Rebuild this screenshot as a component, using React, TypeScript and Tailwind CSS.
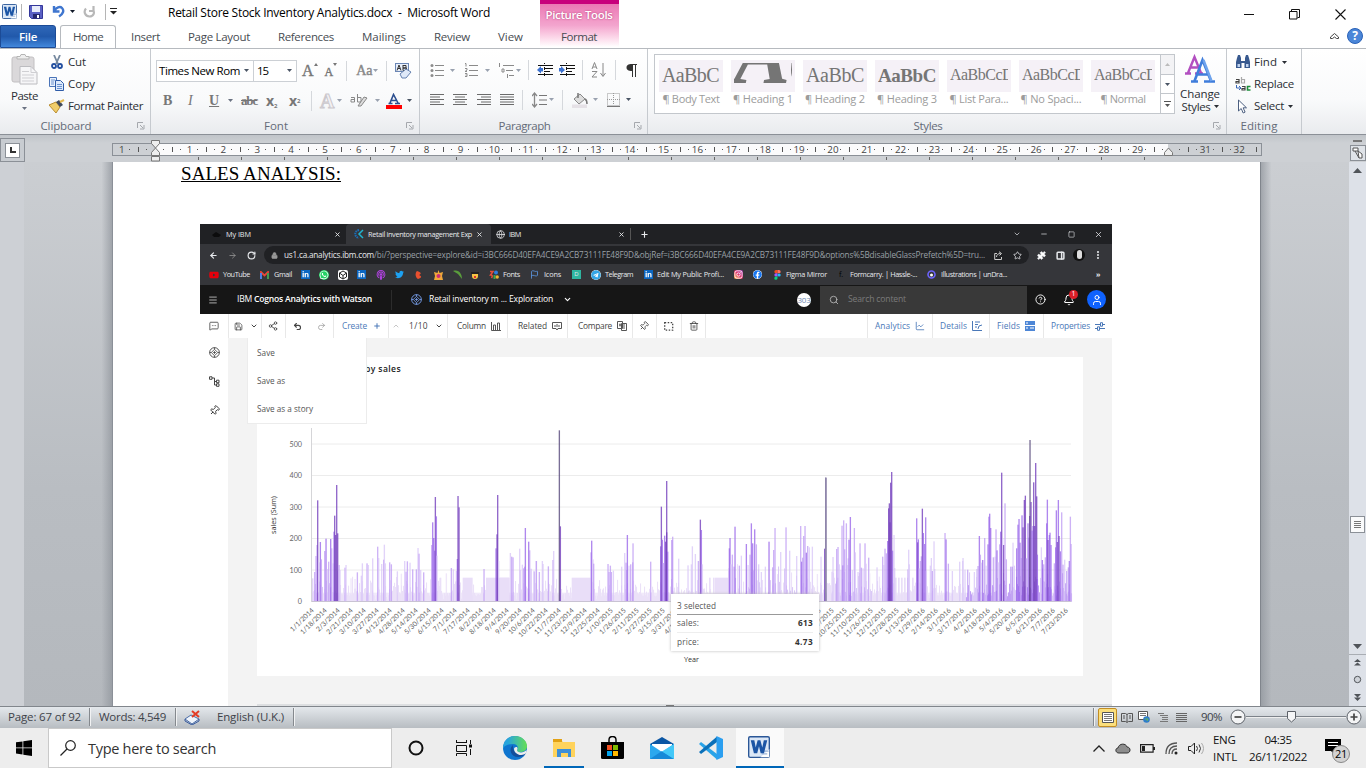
import React, { useLayoutEffect, useRef } from "react";
import {
  Search, Trash2, Pin, Share2, ChevronDown, ChevronUp, Undo2, Redo2, MessageSquareMore, Save, Plus, X,
  ArrowLeft, ArrowRight, RotateCw, Lock, Star, Puzzle, EllipsisVertical, Menu, CircleHelp, Bell, User,
  ChartLine, Globe, Flag, Minus, Square, PanelRight,
} from "lucide-react";
import { FaYoutube, FaLinkedinIn, FaWhatsapp, FaTwitter, FaInstagram, FaFacebook, FaTelegram, FaPodcast } from "react-icons/fa";

/** Text set to an exact width by spreading its letters. */
function T({ w, className = "", children }: { w: number; className?: string; children: string }) {
  const ref = useRef<HTMLSpanElement>(null);
  useLayoutEffect(() => {
    const el = ref.current;
    if (!el) return;
    el.style.letterSpacing = "0px";
    const natural = el.getBoundingClientRect().width;
    el.style.letterSpacing = `${(w - natural) / children.length}px`;
  }, [w, children]);
  return <span ref={ref} className={`inline-block shrink-0 whitespace-pre ${className}`}>{children}</span>;
}

function I({ w, h, className = "", children }: { w: number; h: number; className?: string; children: React.ReactNode }) {
  return <svg width={w} height={h} viewBox={`0 0 ${w} ${h}`} fill="none" className={`block shrink-0 ${className}`}>{children}</svg>;
}

const Arrow = ({ className = "" }: { className?: string }) => (
  <I w={5} h={3} className={className || "text-gray-600"}><path d="M0 0h5L2.5 3z" fill="currentColor" /></I>
);
const Sep = ({ className = "" }: { className?: string }) => <div className={`h-5 w-px shrink-0 bg-[#d5d8dc] ${className}`} />;
const Launcher = ({ className = "" }: { className?: string }) => (
  <I w={8} h={8} className={`text-[#a5a8ad] ${className}`}><path d="M.5 6V.5H6M3 3l3 3M7 3v4H3" stroke="currentColor" /></I>
);

const wordFont = "font-['Open_Sans',sans-serif]";
const serif = "font-['Liberation_Serif',serif]";

function WordLogo({ s }: { s: number }) {
  return (
    <svg width={s} height={s} viewBox="0 0 16 16" className="block shrink-0">
      <rect x=".5" y=".5" width="15" height="15" rx="1" fill="#dbe7f6" stroke="#2b5797" />
      <path d="M9 15.5l6.500-6v6z" fill="#fff" /><path d="M10 13h4M11 11h4" stroke="#9bb4d8" />
      <path d="M2 3h2.600l1 5.400L7 3h2l1.400 5.400L11.500 3H14l-2.400 9.500H9.200L8 7.500l-1.300 5H4.300z" fill="#1c55a5" />
    </svg>
  );
}

function TitleArea() {
  return (
    <header className="flex h-12 bg-white">
      <div className="flex w-[540px] flex-col">
        <div className="flex h-[25px] items-center pb-[2px] pl-[2px]">
          <WordLogo s={15} />
          <div className="ml-1 h-4 w-px bg-[#b5b5b5]" />
          <I w={14} h={14} className="ml-[7px]"><path d="M.5.500h13v13h-11l-2-2z" fill="#5a60c4" stroke="#34379a" /><path d="M3 1h8v6H3z" fill="#e8ecfa" /><path d="M4 9h7v4.500H4z" fill="#26286e" /><path d="M8 10h2v3H8z" fill="#fff" /></I>
          <I w={13} h={13} className="ml-[9px]"><path d="M2 1v5.500h5.500M2.500 6C4 2.500 8 1 10 3c2.500 2.500 1 6-3 8.500" stroke="#3f76cf" strokeWidth="2.400" /></I>
          <Arrow className="ml-[5px] text-gray-900" />
          <I w={13} h={13} className="ml-2"><path d="M10.500 1v5H6M3 3.500C0 7 2.500 11.500 6.500 11.500S12 8 10 4.500" stroke="#b8b8b8" strokeWidth="2.200" /></I>
          <div className="ml-[9px] h-4 w-px bg-[#b5b5b5]" />
          <I w={7} h={7} className="ml-[4px]"><path d="M0 .500h7" stroke="#222" /><path d="M0 3h7L3.500 6.500z" fill="#222" /></I>
          <T w={322} className="ml-[51px] mt-[3px] text-[12px] text-black">Retail Store Stock Inventory Analytics.docx  -  Microsoft Word</T>
        </div>
        <div className="flex h-[23px] items-center text-[11.5px] text-[#474c52]">
          <div className="flex h-[23px] w-14 items-center justify-center rounded-tr-[3px] border border-[#1c4b96] bg-linear-to-b from-[#2f67b8] via-[#2159ab] to-[#4288dc] font-semibold text-white"><T w={18}>File</T></div>
          <div className="ml-1 h-6 w-14 rounded-t-[3px] border border-b-0 border-[#b6babf] bg-white pl-3 leading-[22px]"><T w={30}>Home</T></div>
          <T w={29} className="ml-[15px]">Insert</T>
          <T w={62} className="ml-7">Page Layout</T>
          <T w={56} className="ml-7">References</T>
          <T w={44} className="ml-7">Mailings</T>
          <T w={36} className="ml-7">Review</T>
          <T w={25} className="ml-7">View</T>
        </div>
      </div>
      <div className="flex h-[47px] w-[79px] flex-col items-center border-t-4 border-[#c8007c] bg-linear-to-b from-[#ea78b4] via-[#f3a5ce] via-50% to-white pr-[1px]">
        <div className="flex h-[22px] items-center"><T w={67} className="text-[11.5px] font-semibold text-white [text-shadow:0_0_2px_#b0306f]">Picture Tools</T></div>
        <div className="flex h-[21px] items-center"><T w={36} className="text-[11.5px] text-[#474c52]">Format</T></div>
      </div>
      <div className="flex grow flex-col items-end">
        <div className="flex h-7 items-center pr-5">
          <I w={10} h={10}><path d="M0 5.500h10" stroke="#111" /></I>
          <I w={11} h={11} className="ml-[35px]"><path d="M.5 2.500h7.500v7.500H.500zM2.500 2.500V.500h8v8h-2" stroke="#111" /></I>
          <I w={11} h={11} className="ml-[35px]"><path d="M.5.500l10 10M10.500.500l-10 10" stroke="#111" strokeWidth="1.100" /></I>
        </div>
        <div className="flex h-4 items-center pr-[3px]">
          <I w={9} h={7}><path d="M.5 4l4-3.500 4 3.500v1.500h-2L4.500 4 2.500 5.500h-2z" stroke="#444" /></I>
          <div className="ml-2 flex size-4 items-center justify-center rounded-full border border-[#2a62b8] bg-[#4b86d8] font-['Open_Sans',sans-serif] text-[12px] font-bold text-white">?</div>
        </div>
      </div>
    </header>
  );
}

const GroupLabel = ({ w, children, launcher = true }: { w: number; children: string; launcher?: boolean }) => (
  <div className="flex h-[15px] items-center pr-[5px] text-[11.5px] text-[#646b78]">
    <div className="flex grow justify-center pr-[5px]"><T w={w}>{children}</T></div>
    {launcher && <Launcher />}
  </div>
);

function Lines({ rows }: { rows: number[][] }) {
  return <I w={14} h={11}>{rows.map(([a, b], i) => <path key={i} d={`M${a} ${i * 2.5 + 0.5}H${b}`} stroke="#6b6b6b" />)}</I>;
}

function ListIcon({ kind }: { kind: "dot" | "num" }) {
  return (
    <I w={14} h={14}>
      <path d="M5 2.500h9M5 7.500h9M5 12.500h9" stroke="#8a8a8a" />
      {kind === "dot"
        ? <g fill="#8c8c8c"><circle cx="2" cy="2.500" r="1.500" /><circle cx="2" cy="7.500" r="1.500" /><circle cx="2" cy="12.500" r="1.500" /></g>
        : <path d="M1 .500h1v3M1 5.500h2v1.500l-2 1.500h2M1 10.500h2v3H1M1.500 12h1" stroke="#8c8c8c" />}
    </I>
  );
}

function IndentIcon({ flip = false }: { flip?: boolean }) {
  return (
    <I w={16} h={14}>
      <path d="M1 2.500h15M7 5.500h9M7 8.500h6M1 11.500h15" stroke="#111" strokeWidth="1.200" />
      <path d="M7.500 0v14" stroke="#111" strokeDasharray="1 1" />
      <path d={flip ? "M0 5h2V3l4 4-4 3.500V8.500H0z" : "M6 5H4V3L0 7l4 3.500V8.500h2z"} fill="#3c72d0" />
    </I>
  );
}

const styleTiles = [
  { name: "Body Text", sample: "AaBbC", w: 57, lw: 57, cls: "text-[20px] mt-[2px]" },
  { name: "Heading 1", sample: "Aa", w: 98, lw: 60, cls: "text-[84px] font-bold italic -mt-[50px]" },
  { name: "Heading 2", sample: "AaBbC", w: 58, lw: 60, cls: "text-[20px] mt-[2px]" },
  { name: "Heading 3", sample: "AaBbC", w: 58, lw: 60, cls: "text-[19px] mt-[3px] font-bold" },
  { name: "List Para...", sample: "AaBbCcD", w: 63, lw: 59, cls: "text-[16px] mt-[4px]" },
  { name: "No Spaci...", sample: "AaBbCcD", w: 63, lw: 61, cls: "text-[16px] mt-[4px]" },
  { name: "Normal", sample: "AaBbCcD", w: 63, lw: 45, cls: "text-[16px] mt-[4px]" },
];

function Ribbon() {
  const group = "flex h-[85px] shrink-0 flex-col border-r border-[#c6cacf]";
  return (
    <div className="flex h-[87px] border-y border-t-[#b6babf] border-b-[#8b9097] bg-linear-to-b from-white via-[#f9fafb] via-60% to-[#e9ebee] text-[11.5px] text-[#2a2e34]">
      <div className={`${group} w-[151px]`}>
        <div className="flex h-[69px]">
          <div className="flex w-[49px] flex-col items-center pt-[5px]">
            <I w={27} h={31}><rect x="1" y="3" width="22" height="25" rx="2" fill="#dad8da" stroke="#c2c0c2" /><path d="M6 5h12V2.500h-3L14 .500h-4L9 2.500H6z" fill="#eee" stroke="#b5b5b5" /><path d="M9 12.500h11l6 6V30H9z" fill="#f6f6f8" stroke="#bcbcc0" /><path d="M20 12.500v6h6M11 17.500h7M11 21h12M11 24h12M11 27h12" stroke="#cfcfd3" /></I>
            <T w={27} className="mt-[3px] leading-4">Paste</T>
            <Arrow className="mt-[3px] text-gray-500" />
          </div>
          <div className="flex flex-col pt-[2px]">
            <div className="flex h-[22px] items-center"><I w={16} h={14}><path d="M5 0l4 9M11 0L7 9" stroke="#76899f" strokeWidth="1.800" /><circle cx="5" cy="11" r="2" stroke="#2450a0" strokeWidth="1.800" /><circle cx="11" cy="11" r="2" stroke="#2450a0" strokeWidth="1.800" /></I><T w={18} className="ml-[3px]">Cut</T></div>
            <div className="flex h-[22px] items-center"><I w={16} h={14}><path d="M.5.500h7v9h-7z" fill="#eaf1fc" stroke="#4a74b8" /><path d="M6.500 3.500h5l3 3v7h-8z" fill="#dce9fb" stroke="#2f5ca8" /><path d="M2 3h4M2 5h3M2 7h3M8 7.500h5M8 9.500h5M8 11.500h5" stroke="#6b92d0" /></I><T w={27} className="ml-[3px]">Copy</T></div>
            <div className="flex h-[22px] items-center"><I w={16} h={14}><path d="M0 6l7-3 4 5-4 6z" fill="#f0cd6a" stroke="#b98d30" /><path d="M7 3l3-2 4 5-3 2z" fill="#3f4a5c" /><path d="M11 3l4-2" stroke="#e4b94e" strokeWidth="2" /></I><T w={75} className="ml-[3px]">Format Painter</T></div>
          </div>
        </div>
        <GroupLabel w={51}>Clipboard</GroupLabel>
      </div>

      <div className={`${group} w-[269px]`}>
        <div className="flex h-[69px] flex-col pl-[5px]">
          <div className="flex h-[43px] items-center">
            <div className="flex h-[22px] w-[98px] items-center border border-[#ccd0d5] bg-white pl-[2px] text-black"><T w={81}>Times New Rom</T><Arrow className="ml-[4px] text-gray-600" /></div>
            <div className="flex h-[22px] w-[43px] items-center border border-l-0 border-[#ccd0d5] bg-white pl-[3px] text-black"><T w={11}>15</T><Arrow className="ml-[19px] text-gray-600" /></div>
            <span className={`${serif} ml-[5px] text-[16px] text-[#777] [-webkit-text-stroke:0.4px_#777]`}>A</span><I w={4} h={3} className="mb-3"><path d="M0 3h4L2 0z" fill="#777" /></I>
            <span className={`${serif} ml-[7px] mt-[2px] text-[12px] text-[#777] [-webkit-text-stroke:0.4px_#777]`}>A</span><I w={4} h={3} className="mb-3"><path d="M0 0h4L2 3z" fill="#777" /></I>
            <Sep className="ml-[9px]" />
            <T w={16} className={`${serif} ml-[9px] text-[14px] text-[#888] [-webkit-text-stroke:0.4px_#888]`}>Aa</T><Arrow className="ml-[1px] text-gray-400" />
            <Sep className="ml-[8px]" />
            <I w={17} h={16} className="ml-[8px]"><rect x=".5" y=".5" width="13" height="8" fill="#e8effa" stroke="#6a86b5" /><path d="M2 7.500L4 2l2 5.500M3 5.500h2M8 2v5.500M8 2.500h3v2.500H8h3.500v2.500H8" stroke="#333" /><path d="M5 11l6-5 5 3-5 6-4 0z" fill="#dfe9f8" stroke="#6682b0" /></I>
          </div>
          <div className={`${serif} flex h-[17px] items-center text-[14px] text-[#777]`}>
            <b className="ml-[7px] w-[24px]">B</b><i className="w-[22px] pl-[1px]">I</i><u className="w-[19px] font-bold">U</u><Arrow className="text-gray-500" />
            <T w={16} className="ml-[8px] text-[13px] font-bold line-through">abc</T>
            <span className="ml-[9px] w-[23px] font-['Open_Sans',sans-serif] font-bold">x<sub className="text-[6px]">2</sub></span>
            <span className="w-[22px] font-['Open_Sans',sans-serif] font-bold">x<sup className="text-[6px]">2</sup></span>
            <Sep />
            <span className="ml-[8px] w-[17px] text-[20px] font-bold text-[#f3f1f4] [-webkit-text-stroke:1px_#cbc8cd]">A</span><Arrow className="text-gray-400" />
            <I w={18} h={13} className="ml-[8px]"><path d="M1 3.500h3.500V8H1V5.500h3.500M7.500 0v8H11V3.500H7.500" stroke="#888" /><path d="M8 12l6-9 3 1-6 8z" fill="#ddd" stroke="#888" /></I><Arrow className="ml-[7px] text-gray-400" />
            <I w={16} h={16} className="ml-[6px]"><path d="M2.500 10.500h4M9 10.500h5M4 10L7.500 1.500 12 10M5.500 7.500h5" stroke="#2c4f8f" strokeWidth="1.600" /><path d="M0 12h16v4H0z" fill="#f00" /></I><Arrow className="ml-[5px] text-gray-600" />
          </div>
        </div>
        <GroupLabel w={24}>Font</GroupLabel>
      </div>

      <div className={`${group} w-[228px]`}>
        <div className="flex h-[69px] flex-col pl-[10px]">
          <div className="flex h-[42px] items-center">
            <ListIcon kind="dot" /><Arrow className="ml-[6px] text-gray-400" />
            <div className="ml-[9px]"><ListIcon kind="num" /></div><Arrow className="ml-[7px] text-gray-400" />
            <I w={17} h={15} className="ml-[8px]"><path d="M5 2.500h11M8 7.500h7M11 12.500h5M1.500 0v4M4 6h2v3H4zM9.500 11v4" stroke="#8a8a8a" /></I><Arrow className="ml-[1px] text-gray-400" />
            <Sep className="ml-[7px]" />
            <div className="ml-[8px]"><IndentIcon /></div><div className="ml-[6px]"><IndentIcon flip /></div>
            <Sep className="ml-[7px]" />
            <I w={15} h={16} className="ml-[8px]"><path d="M1 7l2.500-6.500L6 7M2 5h3M1 9.500h5L1 15h5M12 1v13M9.500 11l2.500 3.500 2.500-3.500" stroke="#888" /></I>
            <Sep className="ml-[9px]" />
            <I w={11} h={13} className="ml-[10px]"><path d="M6 .500H11M6.500 0v13M9.500 0v13" stroke="#333" /><path d="M6 0v7C2 7 .500 5.500.500 3.500S2 0 6 0z" fill="#333" /></I>
          </div>
          <div className="flex h-[17px] items-center">
            <Lines rows={[[0, 14], [0, 10], [0, 14], [0, 10], [0, 14]]} />
            <div className="ml-[9px]"><Lines rows={[[0, 14], [2, 12], [0, 14], [2, 12], [0, 14]]} /></div>
            <div className="ml-[10px]"><Lines rows={[[0, 14], [4, 14], [0, 14], [4, 14], [0, 14]]} /></div>
            <div className="ml-[9px]"><Lines rows={[[0, 14], [0, 14], [0, 14], [0, 14], [0, 14]]} /></div>
            <Sep className="ml-[8px]" />
            <I w={15} h={16} className="ml-[9px]"><path d="M7 3.500h8M7 8h8M7 12.500h8" stroke="#777" /><path d="M2.500 2v12M0 4l2.500-3L5 4M0 12l2.500 3L5 12" stroke="#888" strokeWidth="1.300" /></I><Arrow className="ml-[2px] text-gray-400" />
            <Sep className="ml-[8px]" />
            <I w={16} h={16} className="ml-[9px]"><path d="M0 12.500h15V16H0z" fill="#e5e1e6" /><path d="M2 7l6-5 5 5-6 5z" fill="#ddd" stroke="#888" /><path d="M6 1v5M13 7c2 1 2 3 2 5" stroke="#777" strokeWidth="1.500" /></I><Arrow className="ml-[5px] text-gray-400" />
            <I w={14} h={14} className="ml-[9px]"><path d="M.5.500h12v12H.500zM6.500 0v12M0 6.500h13" stroke="#999" strokeDasharray="1 1" /><path d="M0 13.500h13" stroke="#777" /></I><Arrow className="ml-[5px] text-gray-600" />
          </div>
        </div>
        <GroupLabel w={52}>Paragraph</GroupLabel>
      </div>

      <div className={`${group} w-[579px]`}>
        <div className="flex h-[69px] pl-[6px] pt-[5px]">
          <div className="flex h-[60px] w-[521px] border border-[#c3c7cc] bg-white">
            <div className="flex grow gap-2 pl-[4px] pt-[5px]">
              {styleTiles.map((s) => (
                <div key={s.name} className="flex w-16 flex-col items-center">
                  <div className="flex h-8 w-16 justify-start bg-[#f5f1f7] pl-[3px] pt-[3px]">
                    <div className="flex h-[26px] w-[58px] items-start overflow-hidden"><T w={s.w} className={`${serif} leading-none text-[#757575] ${s.cls}`}>{s.sample}</T></div>
                  </div>
                  <T w={s.lw} className="text-[11px] leading-[14px] text-[#9c9c9c]">{"¶ " + s.name}</T>
                </div>
              ))}
            </div>
            <div className="flex w-[14px] flex-col border-l border-[#c3c7cc]">
              <div className="flex h-[19px] items-center justify-center bg-[#f3f3f5]"><I w={5} h={3}><path d="M0 3h5L2.500 0z" fill="#bbb" /></I></div>
              <div className="flex h-[20px] items-center justify-center border-y border-[#c3c7cc]"><Arrow /></div>
              <div className="flex h-[19px] items-center justify-center"><I w={7} h={6}><path d="M0 .500h7" stroke="#555" /><path d="M1 3h5L3.500 6z" fill="#555" /></I></div>
            </div>
          </div>
          <div className="flex w-[50px] flex-col items-center">
            <I w={31} h={30}>
              <path d="M0 19.500h6M10 19.500h8M3 19L9.500 3l6.500 16M5.500 13.500h8" stroke="#b24fc0" strokeWidth="2.400" />
              <path d="M6 27.500h7M19 27.500h11M9.500 27L17.500 6l8.500 21M12 20.500h11" stroke="#3f7ddb" strokeWidth="2.600" />
              <path d="M18.500 6l8 21" stroke="#6ea3ec" strokeWidth="2.400" />
            </I>
            <T w={40} className="mt-[3px] leading-[13px]">Change</T>
            <div className="flex items-center"><T w={29} className="leading-[13px]">Styles</T><Arrow className="ml-[3px]" /></div>
          </div>
        </div>
        <GroupLabel w={29}>Styles</GroupLabel>
      </div>

      <div className={`${group} w-[75px]`}>
        <div className="flex h-[69px] flex-col pl-[8px] pt-[2px]">
          <div className="flex h-[22px] items-center"><I w={16} h={14}><path d="M2 3l1-3h2l1 3v3h4V3l1-3h2l1 3 1 4v6H9.500V8h-3v5H1V7z" fill="#38598f" /><path d="M2.500 9h2.500v3H2.500zM11 9h2.500v3H11z" fill="#bed2f0" /></I><T w={23} className="ml-[3px]">Find</T><Arrow className="ml-[5px]" /></div>
          <div className="flex h-[22px] items-center"><I w={16} h={15}><path d="M1 2.500h3V6H1V4.500h3" stroke="#444" strokeWidth="1.200" /><path d="M6.500 0v6H9.500V2.500H6.500" stroke="#aaa" strokeWidth="1.200" /><path d="M7 9.500h3V13H7v-1.500h3" stroke="#444" strokeWidth="1.200" /><path d="M15.500 9.500h-3V13h3" stroke="#1d8f3a" strokeWidth="1.600" /><path d="M1.500 8v3h4M4 9l2 2-2 2" stroke="#3867b8" /></I><T w={40} className="ml-[3px]">Replace</T></div>
          <div className="flex h-[22px] items-center"><I w={16} h={15}><path d="M3.500 1v11l2.700-2.500 2 4.500 1.900-.900-2-4.300h3.400z" fill="#fff" stroke="#4c5f80" /></I><T w={30} className="ml-[3px]">Select</T><Arrow className="ml-[4px]" /></div>
        </div>
        <GroupLabel w={37} launcher={false}>Editing</GroupLabel>
      </div>
    </div>
  );
}

function Ruler() {
  const cm = 33.86;
  const x0 = 43.2;
  const marks = Array.from({ length: 34 }, (_, i) => i - 1);
  return (
    <div className="flex h-[27px] bg-linear-to-b from-[#c0c4c9] to-[#cdd0d4] to-30%">
      <div className="flex w-[112px] pt-[3px]">
        <div className="flex h-[24px] w-[25px] items-center justify-center border border-[#8b9097] bg-[#c8ccd1]"><div className="flex size-[15px] items-center justify-center border border-[#8b9097] bg-white"><I w={6} h={6}><path d="M1 0v5h5" stroke="#333" strokeWidth="2" /></I></div></div>
      </div>
      <I w={1170} h={27}>
        <rect x=".5" y="8.500" width="1149" height="12" fill="#cdd0d4" stroke="#8b9097" />
        <rect x="43" y="9" width="1013" height="11" fill="#fbfbfc" />
        {marks.map((n) => {
          const x = x0 + n * cm;
          return (
            <g key={n}>
              {n !== 0 && n !== 30 && <text x={x + 0.5} y="18" textAnchor="middle" fontSize="9.800" fontFamily="Open Sans" fill="#444">{Math.abs(n)}</text>}
              <g stroke="#555">
                {n < 32 && <path d={`M${Math.round(x + 8)} 14.500h1`} />}
                <path d={`M${Math.round(x + 16.900) + 0.5} 12v5`} />
                {n < 32 && <path d={`M${Math.round(x + 25)} 14.500h1`} />}
              </g>
            </g>
          );
        })}
        {Array.from({ length: 23 }, (_, i) => <path key={i} d={`M${86.5 + Math.round(i * 43)} 22v3`} stroke="#666" />)}
        <path d="M39.500 5.500h8v3l-4 4.500-4-4.500zM39.500 20.500v-3l4-4.500 4 4.500v3zM39.500 21.500h8v4.500h-8z" fill="#eee" stroke="#777" />
        <path d="M1052.500 20.500v-3l4-4.500 4 4.500v3z" fill="#eee" stroke="#777" />
      </I>
      <div className="grow" />
      <div className="flex w-[17px] flex-col items-center pt-[5px]">
        <div className="h-[2px] w-[9px] bg-[#777]" />
        <div className="mt-[3px] flex size-[16px] items-center justify-center border border-[#8b9097] bg-[#dfe3e8]"><I w={12} h={12}><path d="M1 1h5v3H1zM3 4l4 7M6 4l4 3v4H7z" stroke="#555" fill="#fff" /></I></div>
      </div>
    </div>
  );
}

/* Bars are [x, top, shade] in thirds of a pixel; the baseline is at 545. */
const shades = ["#ebe1f8", "#dac8f7", "#c09ff4", "#9b69ea", "#7440bd", "#574a7c"];
type Bar = [number, number, number];
const parts: { dx: number; bars: Bar[] }[] = [
  { dx: -186, bars: [
    [188, 475, 1], [194, 456, 2], [198, 408, 2], [201, 375, 2], [203, 241, 4], [207, 427, 1], [211, 366, 3], [214, 418, 2], [224, 393, 2], [228, 356, 3], [232, 447, 1], [236, 425, 2], [242, 357, 3], [245, 385, 2], [249, 430, 1], [252, 335, 3], [254, 287, 4], [257, 345, 4], [260, 195, 4], [263, 340, 4], [267, 435, 2], [270, 450, 1],
    [285, 443, 2], [288, 435, 1], [303, 475, 0], [315, 477, 0], [322, 457, 2], [334, 467, 1], [337, 430, 1], [351, 430, 2], [355, 435, 1], [368, 415, 1], [383, 380, 2], [386, 414, 1], [395, 432, 1], [401, 419, 2], [403, 374, 1], [406, 430, 1], [419, 427, 2], [424, 433, 2], [442, 454, 1], [454, 461, 0], [464, 423, 1], [468, 455, 2], [472, 424, 2], [480, 428, 1], [488, 448, 2], [499, 448, 2], [504, 384, 1], [507, 401, 2], [512, 450, 1], [521, 457, 2],
    [545, 375, 2], [548, 307, 3], [551, 354, 3], [554, 392, 3], [556, 231, 4], [559, 289, 3], [561, 407, 1], [570, 474, 0], [589, 460, 0], [604, 444, 2], [610, 448, 1], [619, 453, 1], [622, 417, 3], [624, 228, 4], [627, 262, 4], [702, 447, 2],
    [738, 385, 3], [741, 343, 4], [743, 225, 4], [746, 423, 1], [781, 399, 1], [785, 410, 2], [789, 412, 2], [809, 386, 1], [811, 450, 1], [817, 434, 1], [821, 445, 2], [824, 440, 2], [826, 324, 3], [836, 365, 3], [839, 391, 2], [843, 446, 1], [853, 455, 2], [859, 423, 1],
  ] },
  { dx: 654, bars: [
    [3, 447, 1], [12, 452, 1], [19, 423, 2], [28, 456, 2], [37, 423, 1], [39, 432, 1], [55, 439, 2], [69, 420, 2], [71, 393, 1], [88, 31, 5], [91, 319, 4], [183, 397, 2], [185, 362, 3], [189, 418, 1], [191, 431, 2], [234, 432, 2], [237, 456, 2], [241, 437, 2], [244, 456, 2], [250, 452, 1], [275, 440, 1], [284, 399, 1], [288, 428, 2], [290, 450, 2], [292, 345, 3], [297, 437, 1], [302, 433, 2], [308, 427, 2], [309, 370, 2], [362, 425, 2],
    [392, 379, 3], [394, 260, 4], [397, 359, 3], [400, 429, 2], [404, 347, 3], [407, 365, 4], [410, 183, 4], [410, 337, 4], [413, 395, 3], [426, 360, 3], [428, 350, 2], [446, 416, 1], [474, 436, 1], [484, 433, 1], [487, 379, 1], [496, 402, 1], [505, 423, 2], [511, 299, 4], [514, 330, 3], [517, 433, 1],
    [598, 385, 3], [600, 354, 3], [603, 433, 1], [607, 404, 2], [612, 440, 2], [615, 320, 3], [628, 437, 2], [634, 407, 1], [649, 372, 3], [654, 435, 1], [660, 404, 2], [664, 310, 3], [668, 370, 3], [674, 328, 3], [679, 373, 2], [686, 433, 1], [694, 456, 1], [706, 440, 1], [717, 365, 3], [728, 442, 2], [731, 390, 2], [735, 324, 2], [752, 396, 1], [768, 322, 2], [779, 392, 1], [800, 408, 1], [812, 318, 2], [815, 425, 3], [818, 413, 2], [821, 348, 2], [825, 318, 2], [829, 398, 3], [833, 378, 2], [838, 382, 1], [847, 380, 1], [862, 462, 0], [873, 410, 1], [884, 386, 4], [887, 173, 5],
  ] },
  { dx: 1494, bars: [
    [66, 455, 1], [69, 411, 1], [80, 387, 2], [84, 381, 2], [88, 433, 1], [93, 450, 1], [96, 317, 2], [99, 436, 3], [101, 301, 2], [104, 388, 2], [109, 310, 2], [114, 415, 1], [117, 359, 3], [121, 291, 3], [127, 450, 1], [133, 324, 2], [136, 397, 1], [144, 456, 1], [150, 370, 2], [154, 443, 2], [159, 445, 1], [165, 370, 2], [168, 431, 1], [176, 413, 2], [179, 460, 0], [201, 442, 1], [208, 470, 0], [218, 410, 2], [221, 435, 1], [225, 386, 2], [229, 400, 2], [233, 363, 3], [236, 265, 4], [238, 250, 4], [240, 307, 4], [242, 188, 4], [245, 156, 4], [248, 392, 3], [252, 345, 1], [254, 444, 1],
    [294, 448, 2], [296, 389, 1], [298, 433, 1], [320, 295, 3], [323, 367, 4], [325, 358, 3], [328, 445, 1], [331, 423, 2], [334, 409, 2], [337, 266, 4], [340, 339, 3], [344, 372, 3], [347, 292, 3], [349, 452, 1], [361, 437, 1], [364, 414, 1], [367, 453, 2], [372, 364, 1], [374, 447, 1], [405, 339, 2], [408, 358, 3], [415, 431, 2], [427, 453, 1], [449, 425, 1], [458, 423, 1], [459, 414, 1], [465, 449, 1], [473, 449, 2], [493, 456, 1], [500, 447, 1], [504, 438, 2], [508, 348, 3], [511, 404, 2], [514, 428, 1], [518, 420, 3], [524, 354, 2], [528, 437, 1], [534, 373, 3], [537, 290, 3], [539, 281, 3], [542, 324, 3], [550, 412, 2], [555, 410, 1], [558, 328, 2], [561, 391, 3], [565, 427, 1], [569, 373, 2], [572, 335, 3], [575, 158, 4], [578, 355, 1], [581, 375, 4], [585, 250, 2], [589, 418, 2], [602, 440, 2], [607, 440, 3], [609, 368, 1], [613, 437, 1],
    [620, 385, 3], [624, 314, 3], [627, 297, 3], [630, 368, 3], [633, 414, 2], [636, 286, 3], [639, 322, 4], [643, 240, 4], [646, 227, 4], [649, 415, 2], [654, 310, 3], [657, 353, 3], [659, 288, 4], [660, 60, 5], [663, 246, 4], [666, 332, 3], [669, 318, 3], [671, 187, 4], [674, 318, 4], [677, 129, 4], [680, 229, 4], [682, 404, 3], [694, 382, 1], [697, 420, 3], [701, 433, 2], [706, 412, 2], [710, 310, 3], [712, 239, 3], [714, 360, 4], [718, 345, 3], [720, 338, 3], [723, 375, 3], [733, 430, 2], [737, 382, 3], [739, 271, 3], [742, 366, 4], [745, 240, 3], [747, 348, 4], [751, 394, 3], [755, 277, 2], [759, 434, 2], [764, 419, 1], [770, 453, 2], [775, 442, 2], [778, 423, 3], [781, 290, 2], [783, 372, 2],
  ] },
];
const flats: [number, number][] = [[452, 482], [522, 592], [564, 592], [779, 836], [1209, 1254]];

const dates = ("1/1 1/18 2/3 2/21 3/10 3/27 4/12 4/28 5/14 5/30 6/15 7/1 7/17 8/2 8/18 9/4 9/20 10/6 10/22 11/7 11/23 12/9 12/25|" +
  "1/10 1/26 2/11 2/27 3/15 3/31 4/16 5/2 5/18 6/3 6/19 7/5 7/21 8/6 8/22 9/7 9/23 10/9 10/25 11/10 11/26 12/12 12/28|" +
  "1/13 1/29 2/14 3/1 3/17 4/2 4/18 5/4 5/20 6/5 6/21 7/7 7/23")
  .split("|").flatMap((year, i) => year.split(" ").map((d) => `${d}/${2014 + i}`));

function Chart() {
  let seed = 7;
  const rnd = () => ((seed = (seed * 16807) % 2147483647) / 2147483647);
  const filler: number[][] = [];
  for (let x = 3; x < 2278; x += 3) {
    const late = x > 1960;
    const busy = late || x < 85 || (x > 1245 && x < 1480) || (x > 1560 && x < 1680);
    filler.push([x, (rnd() < 0.12 ? 6 : 18) + rnd() * rnd() * (busy ? 95 : 60), late ? (rnd() > 0.5 ? 2 : 1) : busy && rnd() > 0.4 ? 1 : 0]);
  }
  return (
    <svg width="826" height="298" viewBox="257 378 826 298" className="block shrink-0">
      {[0, 1, 2, 3, 4, 5].map((n) => (
        <g key={n}>
          {n > 0 && <path d={`M312 ${601.5 - n * 31.5}h759`} stroke="#ececec" />}
          <text x="302" y={604 - n * 31.5} fontSize="7.200" textAnchor="end" fontFamily="Lato" fill="#666">{n * 100}</text>
        </g>
      ))}
      <path d="M311.500 428v174" stroke="#d5d5d8" />
      <g transform="translate(312 420) scale(.33333)">
        <rect x="0" y="518" width="2276" height="27" fill="#f1eafa" />
        {filler.map(([x, h, s]) => <rect key={x} x={x} y={545 - h} width="3.200" height={h} fill={shades[s]} />)}
        {flats.map(([a, b]) => <rect key={a} x={a} y="473" width={b - a} height="72" fill="#e9def8" />)}
        {[1575, 1749, 1758, 1767, 1776, 1785, 1800, 1191, 1203, 383].map((x) => <rect key={x} x={x} y="473" width="5" height="72" fill="#e9def8" />)}
        {parts.map((p) => (
          <g key={p.dx} transform={`translate(${p.dx} 0)`}>
            {p.bars.map(([x, y, s], i) => <rect key={i} x={x - 1.9} y={y} width="4" height={545 - y} fill={shades[s]} opacity=".8" />)}
          </g>
        ))}
        <rect x="1539" y="173" width="5" height="372" fill="#8f86ab" />
      </g>
      <path d="M312 601.500h759" stroke="#c9c3d3" />
      <g fontSize="6.900" fontFamily="Lato" fill="#5f5f5f">
        {dates.map((d, i) => <text key={d} textAnchor="end" transform={`translate(${314.5 + i * 13} 611) rotate(-44)`}>{d}</text>)}
      </g>
      <text transform="translate(275.500 534) rotate(-90)" fontSize="7.200" fontFamily="Open Sans" fill="#333" textLength="38">sales (Sum)</text>
      <text x="684" y="662" fontSize="7.200" fontFamily="Open Sans" fill="#333" textLength="15">Year</text>
    </svg>
  );
}

const InBadge = () => <div className="ml-[9px] flex size-[9px] shrink-0 items-center justify-center bg-[#0a66c2] text-white"><FaLinkedinIn size={7} /></div>;

function BrowserChrome() {
  return (
    <div className="flex h-[61px] flex-col bg-[#35363a] text-[7.300px] text-[#e8eaed]">
      <div className="flex h-5 items-center bg-[#202124]">
        <I w={11} h={8} className="ml-[11px]"><path d="M1 5l4-3 5 3-2 2H3z" fill="#0c0c0d" /></I>
        <T w={25} className="ml-[4px]">My IBM</T><X size={7} strokeWidth={3} className="ml-[83px]" />
        <div className="ml-[5px] flex h-5 w-[145px] items-center rounded-t-[4px] bg-[#35363a]">
          <I w={10} h={10} className="ml-[8px]"><path d="M5 1C0 2 0 8 5 9" stroke="#1a6fb8" strokeWidth="2" strokeDasharray="1.500 .8" /><path d="M9 1L5 5l4 4" stroke="#20b5d0" strokeWidth="1.500" /></I>
          <T w={104} className="ml-[4px]">Retail inventory management Exp</T><X size={7} strokeWidth={3} className="ml-[4px]" />
        </div>
        <Globe size={9} className="ml-[5px]" /><T w={12} className="ml-[4px]">IBM</T><X size={7} strokeWidth={3} className="ml-[97px]" />
        <div className="ml-[5px] h-3 w-px bg-[#555]" /><Plus size={9} strokeWidth={3} className="ml-[9px]" />
        <ChevronDown size={8} className="ml-[364px]" /><Minus size={8} className="ml-[19px]" /><Square size={7} className="ml-[20px]" /><X size={9} className="ml-[19px]" />
      </div>
      <div className="flex h-[22px] items-center">
        <ArrowLeft size={9} strokeWidth={3} className="ml-[9px]" /><ArrowRight size={9} className="ml-[10px] text-[#999]" /><RotateCw size={9} className="ml-[10px]" strokeWidth={3} />
        <div className="ml-[8px] flex h-[18px] w-[765px] items-center rounded-full bg-[#202124]">
          <Lock size={7} fill="#999" className="ml-[7px] text-[#999]" />
          <T w={90} className="ml-[6px] text-[8.200px]">us1.ca.analytics.ibm.com</T>
          <T w={611} className="text-[8.200px] text-[#9aa0a6]">/bi/?perspective=explore&id=i3BC666D40EFA4CE9A2CB73111FE48F9D&objRef=i3BC666D40EFA4CE9A2CB73111FE48F9D&options%5BdisableGlassPrefetch%5D=tru...</T>
          <I w={9} h={9} className="ml-[9px]"><path d="M3 2.500H.700v6H7.500V6M2.500 6c0-2 1.500-3.500 4-3.500M5 .700l2.500 1.800L5.500 4.500" stroke="#ccc" /></I><Star size={9} className="ml-[10px]" />
        </div>
        <Puzzle size={9} fill="white" className="ml-[8px]" /><PanelRight size={9} strokeWidth={4} className="ml-[10px]" />
        <div className="ml-[8px] flex size-[12px] justify-center rounded-full bg-[#111]"><div className="mt-[1px] h-[9px] w-[5px] rounded-full bg-[#ddd]" /></div>
        <EllipsisVertical size={10} strokeWidth={3} className="ml-[8px]" />
      </div>
      <div className="flex h-[19px] items-center pb-[2px]">
        <FaYoutube size={10} className="ml-[9px] text-red-600" /><T w={27} className="ml-[4px]">YouTube</T>
        <I w={9} h={8} className="ml-[10px]"><path d="M1 8V1l3.500 3.500L8 1v7" stroke="#ea4335" strokeWidth="1.800" /><path d="M1 8V2" stroke="#4285f4" strokeWidth="1.800" /><path d="M8 8V2" stroke="#34a853" strokeWidth="1.800" /></I><T w={18} className="ml-[5px]">Gmail</T>
        <InBadge />
        <FaWhatsapp size={10} className="ml-[9px] rounded-full bg-[#25d366] text-white" />
        <I w={10} h={10} className="ml-[9px]"><rect width="10" height="10" rx="2" fill="#fff" /><path d="M5 1l3.500 2v4L5 9 1.500 7V3zM1.500 3L5 5.500 8.500 3M5 5.500V9" stroke="#222" /></I>
        <InBadge />
        <FaPodcast size={10} className="ml-[10px] text-[#b042e0]" />
        <FaTwitter size={9} className="ml-[9px] text-[#1da1f2]" />
        <I w={8} h={9} className="ml-[11px]"><path d="M2 1c4 1 5 3 2 4 3 1 3 3-1 4C0 7 0 3 2 1z" fill="#e8502f" /></I>
        <I w={9} h={10} className="ml-[11px]"><path d="M4.500 0l1 3 3.500-1-1 4 1 4H0l1-4-1-4 3.500 1z" fill="#f0a83a" /><circle cx="4.500" cy="6" r="2" fill="#c92c78" /></I>
        <I w={9} h={9} className="ml-[10px]"><path d="M0 1c6-2 9 3 9 8L5 4z" fill="#5a9d3c" /></I>
        <I w={8} h={9} className="ml-[9px]"><path d="M1 2h6v4a3 3 0 01-6 0z" fill="#f6c443" /><path d="M0 2h8v2H0z" fill="#222" /><path d="M3 6h2v2H3z" fill="#d33" /></I>
        <I w={10} h={9} className="ml-[10px]"><path d="M1 1.500h3L1.500 5q3 0 1 3" stroke="#e34f3a" strokeWidth="1.500" /><circle cx="7" cy="2.500" r="2" fill="#2f7de0" /><path d="M4.500 5h2v4h-2z" fill="#38a852" /><circle cx="8.200" cy="7" r="1.700" fill="#f2b632" /></I>
        <T w={17} className="ml-[4px]">Fonts</T>
        <Flag size={9} className="ml-[10px] text-[#5f9ff0]" /><T w={17} className="ml-[5px]">Icons</T>
        <div className="ml-[11px] flex size-[9px] items-center justify-center bg-[#2fb5a0] text-[6px]">D</div>
        <FaTelegram size={10} className="ml-[10px] rounded-full bg-white text-[#35a6e6]" /><T w={28} className="ml-[4px]">Telegram</T>
        <div className="ml-[2px]"><InBadge /></div><T w={67} className="ml-[4px]">Edit My Public Profi...</T>
        <FaInstagram size={9} className="ml-[10px] rounded-[2px] bg-linear-to-tr from-[#fdb541] via-[#e1306c] to-[#9b36b7] text-white" />
        <FaFacebook size={9} className="ml-[10px] rounded-full bg-white text-[#1877f2]" />
        <I w={7} h={10} className="ml-[12px]"><path d="M3.500 0H2a1.600 1.600 0 000 3.300h1.500z" fill="#f24e1e" /><path d="M3.500 0H5a1.600 1.600 0 010 3.300H3.500z" fill="#ff7262" /><path d="M3.500 3.300H2a1.600 1.600 0 000 3.300h1.500z" fill="#a259ff" /><circle cx="5.100" cy="5" r="1.600" fill="#1abcfe" /><path d="M3.500 6.600H2a1.600 1.600 0 101.500 1.600z" fill="#0acf83" /></I><T w={41} className="ml-[5px]">Figma Mirror</T>
        <T w={4} className="ml-[12px] text-black">f.</T><T w={67} className="ml-[7px]">Formcarry. | Hassle-...</T>
        <I w={9} h={9} className="ml-[10px]"><circle cx="4.500" cy="4.500" r="3.500" stroke="#6c63ff" strokeWidth="1.600" /><circle cx="4.500" cy="5" r="1.500" fill="#fff" /></I>
        <T w={66} className="ml-[5px]">Illustrations | unDra...</T>
        <span className="ml-[89px] font-bold">»</span>
      </div>
    </div>
  );
}

const Wheel = ({ s, c }: { s: number; c: string }) => (
  <svg width={s} height={s} viewBox="0 0 12 12" fill="none" stroke={c} className="block shrink-0"><circle cx="6" cy="6" r="5.300" /><path d="M6 2.500L9.500 6 6 9.500 2.500 6zM6 .500v2M6 9.500v2M.500 6h2M9.500 6h2M6 4.500v3M4.500 6h3" strokeWidth=".9" /></svg>
);

function Cognos() {
  const cell = "flex h-6 shrink-0 items-center border-r border-[#e8e8e8]";
  return (
    <div className="flex h-[482px] w-[912px] flex-col overflow-hidden bg-[#f3f3f3]">
      <BrowserChrome />
      <div className="flex h-[29px] shrink-0 items-center bg-[#161616] text-[8.600px] text-white">
        <Menu size={10} className="ml-[8px] text-[#ccc]" />
        <div className="ml-[19px] flex"><T w={17}>IBM </T><T w={118} className="font-semibold">Cognos Analytics with Watson</T></div>
        <div className="ml-[19px] mr-[19px] h-5 w-px bg-[#2c2c2c]" />
        <Wheel s={11} c="#7aa2f0" /><T w={124} className="ml-[7px]">Retail inventory m ... Exploration</T><ChevronDown size={9} strokeWidth={3} className="ml-[10px]" />
        <div className="ml-[225px] flex size-[14px] items-center justify-center overflow-hidden rounded-full bg-white"><T w={13} className="text-[8px] text-[#6c86ad]">303</T></div>
        <div className="ml-[9px] flex h-[28px] w-[207px] items-center bg-[#393939]"><Search size={10} className="ml-[9px] text-[#bbb]" /><T w={58} className="ml-[9px] text-[#7b7b7b]">Search content</T></div>
        <CircleHelp size={11} className="ml-[8px]" />
        <div className="relative ml-[17px]"><Bell size={12} /><div className="absolute -top-[4px] left-[6px] flex size-[9px] items-center justify-center rounded-full bg-[#da1e28] text-[7px]">1</div></div>
        <div className="ml-[12px] flex size-[19px] items-center justify-center rounded-full bg-[#0f62fe]"><User size={12} /></div>
      </div>
      <div className="flex h-6 shrink-0 bg-white text-[8.400px] text-[#444]">
        <div className={`${cell} w-[29px] pl-[9px]`}><MessageSquareMore size={10} /></div>
        <div className={`${cell} w-[33px] pl-[5px]`}><Save size={9} /><ChevronDown size={8} strokeWidth={3} className="ml-[7px]" /></div>
        <div className={`${cell} w-[24px] pl-[6px]`}><Share2 size={10} /></div>
        <div className={`${cell} w-[48px] pl-[7px]`}><Undo2 size={9} strokeWidth={3} /><Redo2 size={9} className="ml-[15px] text-[#999]" /></div>
        <div className={`${cell} w-[55px] pl-[8px] text-[#4a78b8]`}><T w={25}>Create</T><Plus size={8} strokeWidth={3} className="ml-[6px]" /></div>
        <div className={`${cell} w-[59px] pl-[3px]`}><ChevronUp size={8} className="text-[#aaa]" /><T w={19} className="ml-[9px]">1/10</T><ChevronDown size={8} strokeWidth={3} className="ml-[7px]" /></div>
        <div className={`${cell} w-[60px] pl-[9px]`}><T w={29}>Column</T><I w={10} h={9} className="ml-[5px]"><path d="M.5 0v8.500H10M2.500 8V3h2v5M6.500 8V1h2v7" stroke="#555" /></I></div>
        <div className={`${cell} w-[60px] pl-[10px]`}><T w={29}>Related</T><I w={10} h={9} className="ml-[5px]"><path d="M.5.500h9v6H6L5 8 4 6.500H.500zM3 5V3M5 5V2M7 5V3" stroke="#555" /></I></div>
        <div className={`${cell} w-[65px] pl-[10px]`}><T w={34}>Compare</T><I w={10} h={10} className="ml-[5px]"><path d="M.5.500h5v7h-5zM4.500 2.500h5v7h-5zM2 4h6M3 2.500v3M7 5v3" stroke="#555" /></I></div>
        <div className={`${cell} w-[24px] pl-[6px]`}><Pin size={10} className="rotate-45" /></div>
        <div className={`${cell} w-[25px] pl-[7px]`}><I w={10} h={9}><path d="M.7.700h8v7.500h-8z" stroke="#444" strokeWidth="1.300" strokeDasharray="1.500 1.500" /></I></div>
        <div className={`${cell} w-[24px] pl-[7px]`}><Trash2 size={10} /></div>
        <div className={`${cell} w-[162px]`} />
        <div className={`${cell} w-[65px] pl-[7px] text-[#4a78b8]`}><T w={35}>Analytics</T><ChartLine size={10} className="ml-[5px]" /></div>
        <div className={`${cell} w-[57px] pl-[7px] text-[#4a78b8]`}><T w={27}>Details</T><I w={10} h={10} className="ml-[5px]"><path d="M.5 0v9.500H10M3 1h5M3 3.500h3M3 6h2M6 8l1-3 3-1" stroke="#4a78b8" /></I></div>
        <div className={`${cell} w-[54px] pl-[7px] text-[#4a78b8]`}><T w={23}>Fields</T><I w={10} h={10} className="ml-[5px]"><path d="M0 0h10v4H0zM0 5h10v5H0z" fill="#4d86d6" /><path d="M1 2h2M1 7h2M5 7h4" stroke="#fff" /></I></div>
        <div className="flex items-center pl-[7px] text-[#4a78b8]"><T w={39}>Properties</T><I w={10} h={9} className="ml-[5px]"><path d="M0 2.500h5M8 2.500h2M0 6.500h2M5 6.500h5M5.500.700h2v3.500h-2zM2.500 4.800h2v3.500h-2z" stroke="#4a78b8" /></I></div>
      </div>
      <div className="flex h-[368px]">
        <div className="flex w-[28px] flex-col items-center gap-[18px] bg-white pt-[9px] text-[#333]"><Wheel s={11} c="#444" /><I w={11} h={11}><path d="M.5.800h2.500v2.500H.500zM3 2h2.500v7h2M5.500 5.500h2M7.500 4.200H10v2.500H7.500zM7.500 7.800H10v2.500H7.500z" stroke="#444" /></I><Pin size={11} className="rotate-45" /></div>
        <div className="relative flex grow flex-col pl-[29px] pt-[19px]">
          <div className="flex h-[319px] w-[826px] flex-col bg-white">
            <div className="flex h-[21px] items-center pl-[108px] pt-[3px]"><T w={36} className="text-[8.600px] font-semibold text-[#222]">by sales</T></div>
            <Chart />
          </div>
          <div className="mt-[28px] flex h-[2px] justify-center bg-[#dddfe1]"><div className="ml-[-29px] mt-px h-px w-2 bg-[#777]" /></div>
          <div className="absolute left-[19px] top-0 flex h-[86px] w-[120px] flex-col border border-t-0 border-[#ececec] bg-white pl-[9px] pt-px text-[8.200px] text-[#555]">
            <div className="flex h-[28.500px] items-center"><T w={18}>Save</T></div>
            <div className="flex h-[28.500px] items-center"><T w={28}>Save as</T></div>
            <div className="flex h-[28.500px] items-center"><T w={56}>Save as a story</T></div>
          </div>
          <div className="absolute left-[443px] top-[256px] flex h-[57px] w-[148px] flex-col bg-white px-[6px] pt-[3px] text-[8.200px] text-[#555] shadow-[0_0_3px_#bbb]">
            <div className="flex h-[18px] items-center border-b border-[#999] pt-[2px]"><T w={39}>3 selected</T></div>
            <div className="flex h-[18px] items-center justify-between border-b border-[#eee]"><T w={22}>sales:</T><T w={15} className="font-bold text-[#333]">613</T></div>
            <div className="flex h-[18px] items-center justify-between"><T w={22}>price:</T><T w={18} className="font-bold text-[#333]">4.73</T></div>
          </div>
        </div>
      </div>
    </div>
  );
}

function StatusBar() {
  const sep = "h-[18px] w-px shrink-0 bg-[#85898e] shadow-[1px_0_0_#f1f2f3]";
  return (
    <div className="flex h-[22px] items-center border-t border-[#81868c] bg-linear-to-b from-[#e4e8ec] to-[#b8bdc2] pb-px text-[11.5px] text-[#3e434a]">
      <T w={73} className="ml-[8px]">Page: 67 of 92</T><div className={`${sep} ml-[8px]`} />
      <T w={67} className="ml-[9px]">Words: 4,549</T><div className={`${sep} ml-[9px]`} />
      <I w={17} h={15} className="ml-[8px]"><path d="M1 9l6-4 8 4-7 5z" fill="#eef3fa" stroke="#4a6da8" /><path d="M1 9v2l7 4 7-4V9" stroke="#34589c" /><path d="M8 1l7 6M15 1L8 7" stroke="#e33b26" strokeWidth="2" /></I>
      <T w={67} className="ml-[16px]">English (U.K.)</T><div className={`${sep} ml-[9px]`} />
      <div className="grow" />
      <div className={sep} />
      <div className="ml-[4px] flex h-[19px] w-[19px] items-center justify-center rounded-[2px] border border-[#c28d24] bg-[#fbdf7c]"><I w={12} h={11}><path d="M.5.500h11v10H.500z" fill="#fff" stroke="#555" /><path d="M2 2.500h8M2 4.500h8M2 6.500h8M2 8.500h8" stroke="#777" /></I></div>
      <I w={12} h={11} className="ml-[4px]"><path d="M.5 1.500h4l1.500 1 1.500-1h4v8h-4l-1.500 1-1.500-1h-4zM6 2v8M2 4h2M2 6h2M8 4h2M8 6h2" stroke="#555" /></I>
      <I w={12} h={12} className="ml-[5px]"><path d="M.5.500h9v8h-9z" fill="#fff" stroke="#555" /><path d="M2 2.500h6M2 4.500h6" stroke="#777" /><circle cx="8.500" cy="8.500" r="3.300" fill="#2f7dc8" /><path d="M7 8h3l-1 2" stroke="#66bb55" /></I>
      <I w={10} h={11} className="ml-[8px]"><path d="M0 1.500h6M2 3.500h8M4 5.500h6M4 7.500h6M2 9.500h8" stroke="#777" /></I>
      <I w={11} h={11} className="ml-[8px]"><path d="M0 1.500h11M0 3.500h11M0 5.500h11M0 7.500h11M0 9.500h11" stroke="#666" /></I>
      <T w={21} className="ml-[14px]">90%</T>
      <I w={133} h={18} className="ml-[8px] mr-[3px]">
        <path d="M16 8.500h100" stroke="#7c8289" /><path d="M16 9.500h100" stroke="#eee" />
        <circle cx="8" cy="9" r="7" fill="#f3f4f5" stroke="#5c6168" /><path d="M4.500 9h7" stroke="#444" strokeWidth="1.700" />
        <circle cx="124" cy="9" r="7" fill="#f3f4f5" stroke="#5c6168" /><path d="M120.500 9h7M124 5.500v7" stroke="#444" strokeWidth="1.700" />
        <path d="M57.500 3.500h8v7l-4 3.500-4-3.500z" fill="#f5f6f7" stroke="#5c6168" />
      </I>
    </div>
  );
}

function Taskbar() {
  return (
    <div className="flex h-10 items-center bg-[#ededed]">
      <I w={16} h={16} className="ml-[16px]"><path d="M0 2.300l6.500-.900v6.100H0zM7.300 1.300L16 0v7.500H7.300zM0 8.300h6.500v6.200L0 13.600zM7.300 8.300H16V16l-8.700-1.300z" fill="#000" /></I>
      <div className="ml-[16px] flex h-10 w-[344px] items-center border border-[#c9c9c9] bg-white text-[#333]">
        <I w={16} h={16} className="ml-[11px]"><circle cx="10.500" cy="5.500" r="4.800" stroke="#222" strokeWidth="1.200" /><path d="M7 9l-6.500 6.500" stroke="#222" strokeWidth="1.200" /></I>
        <T w={128} className="ml-[12px] mt-px text-[14.500px]">Type here to search</T>
      </div>
      <I w={16} h={16} className="ml-[16px]"><circle cx="8" cy="8" r="6.500" stroke="#111" strokeWidth="2" /></I>
      <I w={16} h={16} className="ml-[32px]"><path d="M.5 0v3M10.500 0v3M0 2.500h11M.500 5.500h10v6H.500zM.500 16v-2.500h10V16M14.500 0v4M14.500 9v6" stroke="#111" /><path d="M13 4.500h3v3h-3z" fill="#111" /></I>
      <svg width="24" height="24" viewBox="0 0 24 24" className="ml-[31px] block shrink-0">
        <defs><linearGradient id="edgeTop" x1="0" x2="1"><stop offset=".2" stopColor="#28a5dc" /><stop offset="1" stopColor="#65df54" /></linearGradient></defs>
        <circle cx="12" cy="12" r="12" fill="#0f75cf" />
        <path d="M0 11C1 4 6 0 12 0c7 0 12 5 12 10 0 4-3 6-7 6-3 0-4-1-3-2 2-3 0-6-4-6S1 9 0 13z" fill="url(#edgeTop)" />
        <path d="M10 9c-5 4-2 12 5 12 3 0 6-1 8-4-2 1-4 1-6 1-4 0-8-4-7-9z" fill="#134e9b" />
        <path d="M11 13c0-2 4-3 3.500 0-.500 1-1 2 1 3 3 1 6 0 8-2v3c-3 2-5 2-7 2-3-1-5.500-3-5.500-6z" fill="#ededed" />
      </svg>
      <div className="ml-[17px] flex h-10 w-10 flex-col items-center border-b-2 border-[#0067b8] pt-[11px]">
        <I w={22} h={19}><path d="M0 1h8l2 2h12v15H0z" fill="#ffd35c" /><path d="M0 0h9v3H0z" fill="#e2a114" /><path d="M4 18v-8h14v8h-3v-4H8v4z" fill="#3d8fd8" /></I>
      </div>
      <I w={24} h={24} className="ml-[17px]"><path d="M8 7V4q0-3.500 3.500-3.500T15 4v3" stroke="#000" strokeWidth="1.400" /><path d="M0 6h23v15.500q0 1.500-1.500 1.500h-20Q0 23 0 21.500z" fill="#000" /><path d="M6 9h5v5H6z" fill="#f25022" /><path d="M12 9h5v5h-5z" fill="#7fba00" /><path d="M6 15h5v5H6z" fill="#00a4ef" /><path d="M12 15h5v5h-5z" fill="#ffb900" /></I>
      <I w={24} h={22} className="ml-[25px]"><path d="M0 7l12-7 12 7v3H0z" fill="#0b56a4" /><path d="M2 7h20v8H2z" fill="#fff" /><path d="M0 7l12 8 12-8v15H0z" fill="#2ba8ee" /><path d="M0 22l12-8L24 22z" fill="#1689d8" /><path d="M12 14.500L24 7v15z" fill="#43c8f8" /></I>
      <svg width="24" height="24" viewBox="0 0 24 24" className="ml-[25px] block shrink-0"><path d="M0 8l2-2 16 12v5.500z" fill="#29a3e8" /><path d="M0 16l2 2L18 6V.500z" fill="#0b70b9" /><path d="M17.500 0L24 3v18l-6.500 3z" fill="#2b9ff0" /></svg>
      <div className="ml-[13px] flex h-10 w-12 flex-col items-center border-b-2 border-[#0067b8] bg-[#fafafa] pr-[2px] pt-[8px]"><WordLogo s={22} /></div>
      <div className="grow" />
      <I w={12} h={7}><path d="M.5 6.500L6 1l5.500 5.500" stroke="#222" strokeWidth="1.300" /></I>
      <I w={16} h={11} className="ml-[10px]"><path d="M4 10C0 10 0 5 3 5c1-5 8-5 9-1 4 0 4 6 0 6z" fill="#8d8d8d" stroke="#333" /></I>
      <I w={15} h={9} className="ml-[9px]"><path d="M.6.600h12.500v7.500H.600z" stroke="#222" strokeWidth="1.200" /><path d="M2 2h3v5H2zM13 3h2v3h-2z" fill="#222" /></I>
      <I w={14} h={14} className="ml-[10px]"><path d="M1 13Q1 2 12 2M4 13Q4 5 12 5M7 13Q7 8 12 8" stroke="#555" strokeWidth="1.300" /><circle cx="11" cy="12" r="1.500" fill="#222" /></I>
      <I w={16} h={13} className="ml-[9px]"><path d="M.5 4.500H3L6.500 1v11L3 8.500H.500z" stroke="#222" /><path d="M8.500 4q2 2.500 0 5M11 2.500q3 4 0 8" stroke="#333" /><path d="M13.500 1q4 5.500 0 11" stroke="#aaa" /></I>
      <div className="ml-[9px] flex w-[24px] flex-col text-[11.5px] leading-[17px] text-[#111]"><T w={23}>ENG</T><T w={24}>INTL</T></div>
      <div className="ml-[11px] mr-px flex w-[60px] flex-col items-center text-[11.5px] leading-[17px] text-[#111]"><T w={27}>04:35</T><T w={58}>26/11/2022</T></div>
      <div className="relative ml-[16px] mr-[25px] -mt-[3px]"><I w={16} h={15}><path d="M0 0h16v12h-7v3l-3-3H0z" fill="#000" /><path d="M3 3.500h10M3 6.500h10" stroke="#fff" /></I>
        <div className="absolute left-[7px] top-[6px] flex size-[18px] items-center justify-center rounded-full border border-[#888] bg-[#d2d2d2]"><T w={12} className="text-[11px] text-black">21</T></div></div>
    </div>
  );
}

export default function App() {
  return (
    <div className={`flex h-[768px] w-[1366px] flex-col overflow-hidden ${wordFont}`}>
      <TitleArea />
      <Ribbon />
      <Ruler />
      <main className="flex h-[544px] bg-linear-to-b from-[#cbced2] via-[#b9bdc2] via-60% to-[#b4b8bd]">
        <div className="w-6 bg-[#cdd0d5]" />
        <div className="w-[89px] border-r border-[#8b9098] bg-linear-to-r from-transparent from-88% to-[#8f949b]/70" />
        <div className="flex w-[1147px] flex-col bg-white">
          <div className="flex h-[62px] pl-[68px]"><T w={160} className={`${serif} h-6 text-[19px] leading-[24px] text-black underline`}>SALES ANALYSIS:</T></div>
          <div className="pl-[87px]"><Cognos /></div>
        </div>
        <div className="w-[89px] border-l border-[#80858c] bg-linear-to-r from-[#8f949b]/70 to-transparent to-12%" />
        <div className="flex w-[17px] flex-col items-center bg-[#dde1e8] text-[#505459]">
          <I w={9} h={5} className="mt-[6px]"><path d="M0 5h9L4.500 0z" fill="currentColor" /></I>
          <div className="mt-[343px] flex h-[17px] w-[15px] items-center justify-center border border-[#8b9097] bg-[#fafbfc]"><I w={7} h={7}><path d="M0 .500h7M0 2.500h7M0 4.500h7M0 6.500h7" stroke="#777" /></I></div>
          <I w={9} h={5} className="mt-[111px]"><path d="M0 0h9L4.500 5z" fill="currentColor" /></I>
          <div className="mt-[5px] h-px w-full bg-[#a9adb3]" />
          <I w={7} h={7} className="mt-[4px]"><path d="M0 3h7L3.500 0zM0 6.500h7L3.500 3.500z" fill="currentColor" /></I>
          <I w={9} h={9} className="mt-[9px]"><circle cx="4.500" cy="4.500" r="3.200" stroke="currentColor" fill="#cfd3d9" /></I>
          <I w={7} h={7} className="mt-[10px]"><path d="M0 0h7L3.500 3.500zM0 3.500h7L3.500 7z" fill="currentColor" /></I>
        </div>
      </main>
      <StatusBar />
      <Taskbar />
    </div>
  );
}
